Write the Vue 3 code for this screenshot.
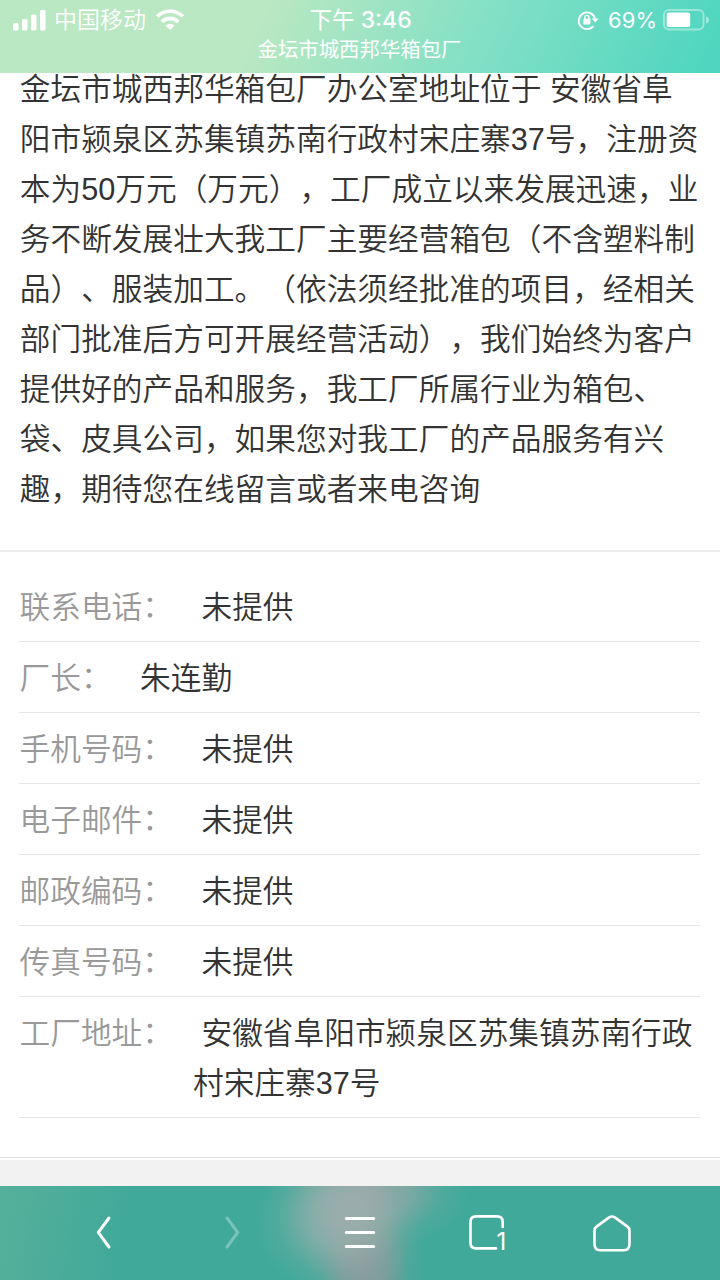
<template>
  <div class="page">
    <header class="top-bar">
      <div class="status">
        <div class="status-left">
          <svg class="signal" width="34" height="22" viewBox="0 0 34 22">
            <rect x="0" y="14" width="5.5" height="7.5" rx="1.5" />
            <rect x="9" y="10" width="5.5" height="11.5" rx="1.5" />
            <rect x="18" y="5.5" width="5.5" height="16" rx="1.5" />
            <rect x="27" y="1" width="5.5" height="20.5" rx="1.5" />
          </svg>
          <span class="carrier">中国移动</span>
          <svg class="wifi" width="30" height="22" viewBox="0 0 30 22">
            <path d="M2.2 7.6 A18 18 0 0 1 27.8 7.6" />
            <path d="M6.8 12.9 A11.4 11.4 0 0 1 23.2 12.9" />
            <path class="solid" d="M15 21 L10.4 16.8 A6.4 6.4 0 0 1 19.6 16.8 Z" />
          </svg>
        </div>
        <div class="clock">下午 <b>3:46</b></div>
        <div class="status-right">
          <svg class="lock" width="22" height="22" viewBox="0 0 22 22">
            <path d="M16.4 17.1 A8.3 8.3 0 1 1 18 9.5" />
            <path class="solid" d="M14.6 9.4 L21.6 9.4 L18.3 13.6 Z" />
            <rect class="solid" x="6.4" y="9.8" width="7" height="5.6" rx="0.8" />
            <path class="shackle" d="M7.9 10.2 V8.4 A2 2 0 0 1 11.9 8.4 V10.2" />
          </svg>
          <span class="percent">69%</span>
          <svg class="battery" width="46" height="22" viewBox="0 0 46 22">
            <rect class="shell" x="1" y="1" width="39.5" height="19.5" rx="5" />
            <rect class="level" x="3.7" y="3.6" width="23.5" height="14.4" rx="2.5" />
            <path class="tip" d="M43 7.5 Q46 8.5 46 11 Q46 13.5 43 14.5 Z" />
          </svg>
        </div>
      </div>
      <div class="page-title">金坛市城西邦华箱包厂</div>
    </header>

    <main class="content">
      <p class="intro">
        <span v-for="line in intro" :key="line" class="line">{{ line }}</span>
      </p>
      <ul class="contacts">
        <li v-for="item in contacts" :key="item.label" class="contact">
          <span class="label">{{ item.label }}<span class="colon">：</span></span>
          <span class="value">&nbsp;{{ item.value }}</span>
        </li>
      </ul>
      <div class="divider"></div>
    </main>

    <nav class="bottom-bar">
      <svg class="nav-icon" viewBox="0 0 128 94">
        <path d="M69 32 L58.3 46.4 L69 61" />
      </svg>
      <svg class="nav-icon disabled" viewBox="0 0 128 94">
        <path d="M59 32 L69.7 46.4 L59 61" />
      </svg>
      <svg class="nav-icon" viewBox="0 0 128 94">
        <path d="M50.3 32.5 H77.7 M50.3 46.5 H77.7 M50.3 60.5 H77.7" />
      </svg>
      <svg class="nav-icon" viewBox="0 0 128 94">
        <path class="thin" d="M72 62.4 H52 Q46.5 62.4 46.5 57 V36 Q46.5 30.4 52 30.4 H73 Q78.7 30.4 78.7 36 V41" />
        <text class="tab-count" x="72.6" y="63.5">{{ tabCount }}</text>
      </svg>
      <svg class="nav-icon" viewBox="0 0 128 94">
        <path class="thin" d="M57.2 31.4 Q60 29.5 62.8 31.4 L75.5 40.6 Q77.5 42 77.5 44.5 V58 Q77.5 64.3 71.5 64.3 H48.5 Q42.5 64.3 42.5 58 V44.5 Q42.5 42 44.5 40.6 Z" />
      </svg>
    </nav>
  </div>
</template>

<script setup>
import { ref } from 'vue';

const intro = [
  '金坛市城西邦华箱包厂办公室地址位于 安徽省阜',
  '阳市颍泉区苏集镇苏南行政村宋庄寨37号，注册资',
  '本为50万元（万元），工厂成立以来发展迅速，业',
  '务不断发展壮大我工厂主要经营箱包（不含塑料制',
  '品）、服装加工。（依法须经批准的项目，经相关',
  '部门批准后方可开展经营活动），我们始终为客户',
  '提供好的产品和服务，我工厂所属行业为箱包、',
  '袋、皮具公司，如果您对我工厂的产品服务有兴',
  '趣，期待您在线留言或者来电咨询',
];

const contacts = [
  { label: '联系电话', value: '未提供' },
  { label: '厂长', value: '朱连勤' },
  { label: '手机号码', value: '未提供' },
  { label: '电子邮件', value: '未提供' },
  { label: '邮政编码', value: '未提供' },
  { label: '传真号码', value: '未提供' },
  { label: '工厂地址', value: '安徽省阜阳市颍泉区苏集镇苏南行政村宋庄寨37号' },
];

const tabCount = ref(1);
</script>

<style>
body {
  background-color: #fff;
}
</style>

<style scoped>
.page {
  width: 720px;
  height: 1280px;
  display: flex;
  flex-direction: column;
  overflow: hidden;
  background-color: #f2f2f2;
  font-family: "Liberation Sans", "Noto Sans CJK SC", sans-serif;
  text-spacing-trim: space-all;
}

.top-bar {
  flex: none;
  height: 73px;
  position: relative;
  z-index: 1;
  color: #fff;
  background: linear-gradient(115deg, #b9e8c2 0%, #b9e8c2 36%, #83e0c5 66%, #50d6c0 97%);
}

.status {
  display: grid;
  grid-template-columns: 1fr auto 1fr;
  align-items: center;
  height: 38px;
  padding: 0 12px 0 13px;
}

.status-left,
.status-right {
  display: flex;
  align-items: center;
}

.status-right {
  justify-content: flex-end;
}

.signal {
  fill: #fff;
}

.carrier {
  margin: 1px 9px 0 7px;
  font-size: 23px;
  line-height: 36px;
  font-weight: 350;
}

.wifi path,
.lock path {
  fill: none;
  stroke: #fff;
  stroke-width: 3.6;
}

.wifi .solid,
.lock .solid {
  fill: #fff;
  stroke: none;
}

.lock {
  margin-top: 1px;
}

.lock path {
  stroke-width: 1.8;
}

.lock .shackle {
  stroke-width: 1.4;
}

.clock {
  margin-top: 2px;
  font-size: 22.5px;
  line-height: 36px;
}

.clock b {
  font-family: Inter, sans-serif;
  font-size: 23px;
  font-weight: 500;
}

.percent {
  margin: 1px 6px 0 9px;
  font-family: Inter, sans-serif;
  font-size: 22px;
}

.battery {
  margin-right: -1px;
}

.shell {
  fill: none;
  stroke: rgba(255, 255, 255, 0.4);
  stroke-width: 2;
}

.level {
  fill: #fff;
}

.tip {
  fill: rgba(255, 255, 255, 0.45);
}

.page-title {
  padding-right: 1px;
  font-size: 20.4px;
  line-height: 24px;
  text-align: center;
}

.content {
  flex: none;
  margin-top: -9px;
  background-color: #fff;
  color: #333;
  font-size: 30.7px;
  font-weight: 350;
  line-height: 50px;
}

.intro {
  margin: 0;
  padding: 0.5px 0 35.5px 19.8px;
  border-bottom: 2px solid #eee;
}

.line {
  display: block;
  white-space: nowrap;
}

.contacts {
  list-style: none;
  margin: 0;
  padding: 19px 20px 39px 19px;
}

.contact {
  display: flex;
  padding: 12px 0 8px 0.5px;
  border-bottom: 1px solid #e6e6e6;
}

.label {
  flex: none;
  margin-right: 20px;
  color: #999;
}

.colon {
  position: relative;
  top: -1px;
}

.divider {
  height: 2px;
  border-top: 1px solid #e2e2e2;
}

.bottom-bar {
  flex: none;
  display: flex;
  height: 94px;
  margin-top: auto;
  padding: 0 40px;
  background:
    radial-gradient(ellipse 85px 75px at 340px 35px, rgba(160, 174, 173, 0.9) 0%, rgba(160, 176, 174, 0.65) 35%, rgba(130, 175, 165, 0.2) 75%, rgba(65, 169, 154, 0) 100%),
    radial-gradient(ellipse 100px 60px at 370px 5px, rgba(158, 164, 168, 0.95) 0%, rgba(150, 168, 168, 0.65) 40%, rgba(120, 172, 162, 0.2) 75%, rgba(65, 169, 154, 0) 100%),
    radial-gradient(ellipse 60px 110px at 364px 80px, #8b9a9b 0%, rgba(139, 154, 155, 0.8) 35%, rgba(110, 160, 155, 0.25) 75%, rgba(65, 169, 154, 0) 100%),
    linear-gradient(100deg, #55b09a 0%, #41a99a 18%, #41a99a 100%);
}

.nav-icon {
  width: 128px;
  height: 94px;
}

.nav-icon path {
  fill: none;
  stroke: #fff;
  stroke-width: 3;
  stroke-linecap: round;
  stroke-linejoin: round;
}

.nav-icon .thin {
  stroke-width: 2.6;
}

.nav-icon.disabled {
  opacity: 0.3;
}

.tab-count {
  fill: #fff;
  font-family: Inter, sans-serif;
  font-size: 24px;
}
</style>
